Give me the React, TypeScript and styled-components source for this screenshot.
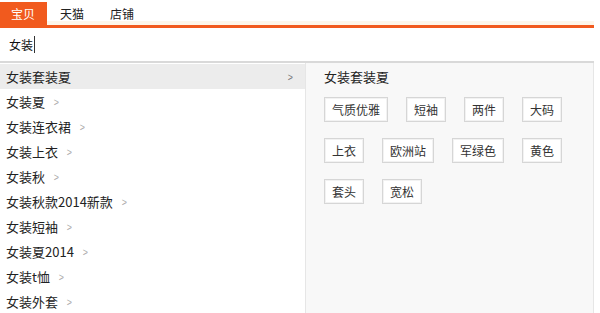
import styled, { createGlobalStyle } from 'styled-components';

const GlobalStyle = createGlobalStyle`
  html, body {
    margin: 0;
    padding: 0;
    background: #fff;
  }
  body {
    font-family: "Noto Sans CJK SC", "Liberation Sans", sans-serif;
    font-size: 12px;
    color: #333;
  }
`

const tabs = ['宝贝', '天猫', '店铺'];

const suggestions = [
  '女装套装夏',
  '女装夏',
  '女装连衣裙',
  '女装上衣',
  '女装秋',
  '女装秋款2014新款',
  '女装短袖',
  '女装夏2014',
  '女装t恤',
  '女装外套',
];

const tags = ['气质优雅', '短袖', '两件', '大码', '上衣', '欧洲站', '军绿色', '黄色', '套头', '宽松'];

export default function App() {
  return (
    <>
      <GlobalStyle />
      <Wrapper>
        <TabBar>
          {tabs.map((t, i) => (
            <Tab key={t} active={i === 0}>{t}</Tab>
          ))}
        </TabBar>

        <SearchBox>
          <Query>女装</Query>
          <Caret />
        </SearchBox>

        <Body>
          <List>
            {suggestions.map((s, i) => (
              <Item key={s} active={i === 0}>
                <span>{s}</span>
                <Arrow active={i === 0}>&gt;</Arrow>
              </Item>
            ))}
          </List>

          <Panel>
            <PanelTitle>女装套装夏</PanelTitle>
            <TagList>
              {tags.map(t => (
                <Tag key={t}>{t}</Tag>
              ))}
            </TagList>
          </Panel>
        </Body>
      </Wrapper>
    </>
  )
}

const Wrapper = styled.div`
  width: 594px;
  height: 313px;
  display: flex;
  flex-direction: column;
  overflow: hidden;
`

const TabBar = styled.div`
  display: flex;
  align-items: flex-end;
  height: 25px;
  border-bottom: 3px solid #f15a1e;
  background: linear-gradient(to bottom, #fff 0, #fff 21px, #fdf6ea 21px);
`

const Tab = styled.div<{ active?: boolean }>`
  height: 23px;
  line-height: 23px;
  padding: 0 ${p => (p.active ? '11px' : '13px')};
  width: ${p => (p.active ? '25px' : 'auto')};
  color: ${p => (p.active ? '#fff' : '#222')};
  background: ${p => (p.active ? '#f15a1e' : 'transparent')};
  font-size: 12px;
`

const SearchBox = styled.div`
  height: 33px;
  display: flex;
  align-items: center;
  padding-left: 9px;
  border-bottom: 2px solid #d9d9d9;
`

const Query = styled.span`
  font-size: 12px;
  color: #111;
`

const Caret = styled.span`
  width: 1px;
  height: 17px;
  margin-left: 1px;
  background: #333;
`

const Body = styled.div`
  flex: 1;
  display: grid;
  grid-template-columns: 305px 1fr;
  min-height: 0;
`

const List = styled.div`
  display: flex;
  flex-direction: column;
  padding-top: 1px;
`

const Item = styled.div<{ active?: boolean }>`
  height: 25px;
  flex: none;
  display: flex;
  align-items: center;
  justify-content: ${p => (p.active ? 'space-between' : 'flex-start')};
  gap: 8px;
  padding: 0 12px 0 6px;
  background: ${p => (p.active ? '#ececec' : 'transparent')};
  color: #222;
  font-size: 13px;
`

const Arrow = styled.span<{ active?: boolean }>`
  font-family: "Liberation Sans", sans-serif;
  font-size: 11px;
  color: ${p => (p.active ? '#777' : '#aaa')};
  transform: scaleX(0.8);
`

const Panel = styled.div`
  background: #f8f8f8;
  border-left: 1px solid #e6e6e6;
  border-right: 1px solid #e6e6e6;
  padding: 6px 0 0 18px;
`

const PanelTitle = styled.div`
  height: 16px;
  line-height: 16px;
  font-size: 13px;
  color: #222;
  margin-bottom: 12px;
`

const TagList = styled.div`
  max-width: 262px;
  display: flex;
  flex-wrap: wrap;
  column-gap: 18px;
  row-gap: 16px;
`

const Tag = styled.div`
  height: 23px;
  line-height: 23px;
  padding: 0 7px;
  background: #fff;
  border: 1px solid #d6d6d6;
  box-shadow: inset 0 0 0 1px #f2f2f2;
  font-size: 12px;
  color: #333;
`
